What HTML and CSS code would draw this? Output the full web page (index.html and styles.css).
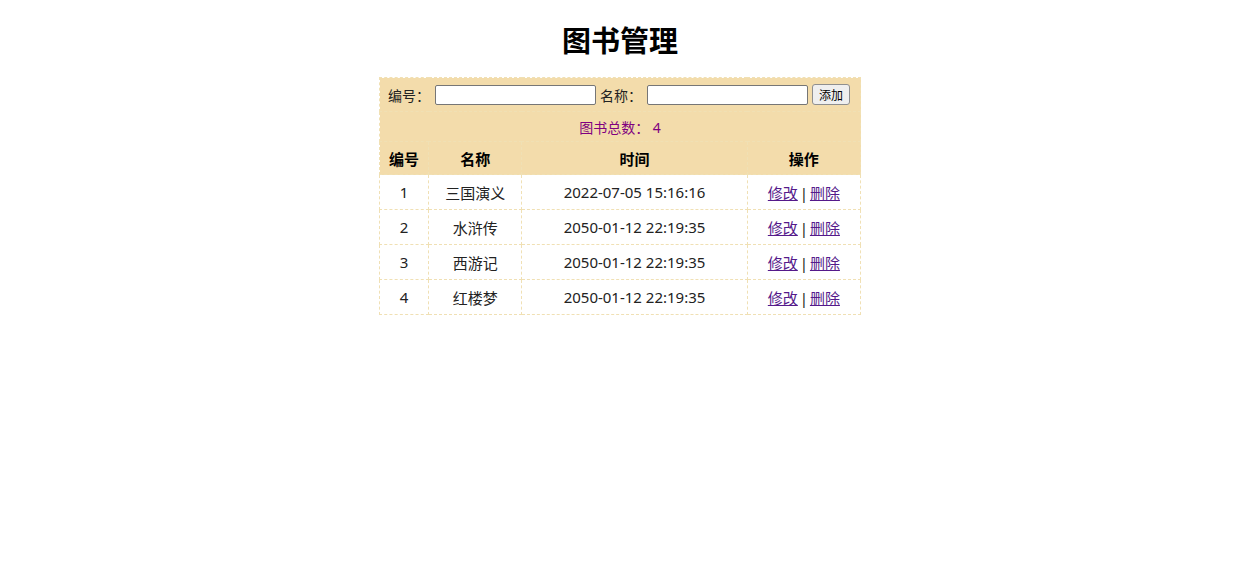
FILE: index.html
```html
<!DOCTYPE html>
<html lang="zh">
<head>
<meta charset="utf-8">
<title>图书管理</title>
<link rel="stylesheet" href="styles.css">
</head>
<body>
<h1 class="title">图书管理</h1>
<table class="books">
  <thead>
    <tr class="form-row">
      <td colspan="4">
        <div class="form">
          <label>编号：</label><input type="text" class="field">
          <label>名称：</label><input type="text" class="field">
          <button class="add">添加</button>
        </div>
      </td>
    </tr>
    <tr class="total-row">
      <td colspan="4" class="total">图书总数：&nbsp;4</td>
    </tr>
    <tr class="head-row">
      <th class="c-id">编号</th>
      <th class="c-name">名称</th>
      <th class="c-time">时间</th>
      <th class="c-op">操作</th>
    </tr>
  </thead>
  <tbody>
    <tr><td>1</td><td>三国演义</td><td>2022-07-05 15:16:16</td><td class="ops"><a href="#">修改</a> | <a href="#">删除</a></td></tr>
    <tr><td>2</td><td>水浒传</td><td>2050-01-12 22:19:35</td><td class="ops"><a href="#">修改</a> | <a href="#">删除</a></td></tr>
    <tr><td>3</td><td>西游记</td><td>2050-01-12 22:19:35</td><td class="ops"><a href="#">修改</a> | <a href="#">删除</a></td></tr>
    <tr><td>4</td><td>红楼梦</td><td>2050-01-12 22:19:35</td><td class="ops"><a href="#">修改</a> | <a href="#">删除</a></td></tr>
  </tbody>
</table>
</body>
</html>
```

FILE: styles.css
```css
body {
  margin: 8px;
  font-family: "Noto Sans", "Noto Sans CJK SC", sans-serif;
  font-size: 15px;
  color: #222;
  background: #fff;
}
.title {
  margin: 11px 0 18px;
  text-align: center;
  font-family: "Noto Sans CJK SC", sans-serif;
  font-size: 29px;
  line-height: 40px;
  font-weight: 700;
  color: #000;
}
.books {
  width: 482px;
  margin: 0 auto;
  border-collapse: collapse;
  text-align: center;
}
.books td, .books th {
  border: 1px dashed #f0e0b4;
  padding: 0;
  height: 34px;
}
thead tr {
  background: #f3dcab;
}
thead td, thead th {
  border-style: dashed;
  border-color: #f7e8c6 #f3dcab;
}
.form-row td {
  height: 33px;
  text-align: left;
}
.form {
  display: flex;
  align-items: center;
  padding: 0 7px 0 8px;
  color: #222;
  font-size: 14px;
}
.form label {
  white-space: nowrap;
}
.field {
  width: 161px;
  height: 20px;
  box-sizing: border-box;
  margin: 0 4px 0 5px;
  border: 1px solid #767676;
  border-radius: 2px;
  padding: 0 2px;
  background: #fff;
}
.add {
  margin-left: 0;
  height: 21px;
  padding: 0 6px;
  font-family: "Noto Sans CJK SC", sans-serif;
  font-size: 12px;
  border: 1px solid #8f8f8f;
  border-radius: 3px;
  background: #efefef;
  color: #000;
}
.total-row td {
  height: 29px;
  color: #800080;
  font-size: 14px;
}
.head-row th {
  height: 32px;
  font-weight: 700;
  color: #000;
}
.c-id { width: 48px; }
.c-name { width: 92px; }
.c-time { width: 224px; }
.c-op { width: 112px; }
tbody td {
  height: 32.5px;
}
.ops {
  word-spacing: -2px;
}
tbody a {
  color: #551a8b;
  text-decoration: underline;
}
```
